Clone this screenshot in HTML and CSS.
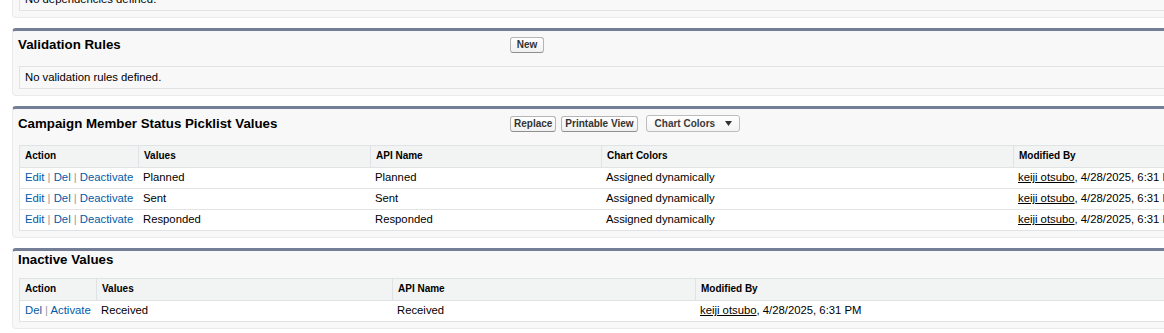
FILE: index.html
```html
<!DOCTYPE html>
<html lang="en">
    <head>
        <meta charset="UTF-8" />
        <link rel="stylesheet" href="styles.css">
        <title>Campaign Member Status</title>
    </head>
    <body>
        <div class="page">
            <!-- 字段依赖 -->
            <div class="pb">
                <div class="pb-header">
                    <h3 class="pb-title">Field Dependencies</h3>
                    <div class="pb-buttons">
                        <button class="btn">&nbsp;New&nbsp;</button>
                    </div>
                </div>
                <div class="pb-body">
                    <div class="pb-empty">No dependencies defined.</div>
                </div>
            </div>

            <!-- 验证规则 -->
            <div class="pb">
                <div class="pb-header">
                    <h3 class="pb-title">Validation Rules</h3>
                    <div class="pb-buttons">
                        <button class="btn">&nbsp;New&nbsp;</button>
                    </div>
                </div>
                <div class="pb-body">
                    <div class="pb-empty">No validation rules defined.</div>
                </div>
            </div>

            <!-- 活动成员状态 -->
            <div class="pb">
                <div class="pb-header">
                    <h3 class="pb-title">Campaign Member Status Picklist Values</h3>
                    <div class="pb-buttons">
                        <button class="btn">Replace</button>
                        <button class="btn">Printable View</button>
                        <button class="menu-btn">
                            Chart Colors
                            <svg width="7" height="5" viewBox="0 0 7 5"><path d="M0 0h7L3.5 5z" fill="#333"/></svg>
                        </button>
                    </div>
                </div>
                <div class="pb-body">
                    <table class="list">
                        <thead>
                            <tr>
                                <th class="col-action">Action</th>
                                <th class="col-values">Values</th>
                                <th class="col-api">API Name</th>
                                <th class="col-chart">Chart Colors</th>
                                <th>Modified By</th>
                            </tr>
                        </thead>
                        <tbody>
                            <tr>
                                <td><a href="#" class="action-link">Edit</a> <span class="sep">|</span> <a href="#" class="action-link">Del</a> <span class="sep">|</span> <a href="#" class="action-link">Deactivate</a></td>
                                <td>Planned</td>
                                <td>Planned</td>
                                <td>Assigned dynamically</td>
                                <td><a href="#" class="user-link">keiji otsubo</a>, 4/28/2025, 6:31 PM</td>
                            </tr>
                            <tr>
                                <td><a href="#" class="action-link">Edit</a> <span class="sep">|</span> <a href="#" class="action-link">Del</a> <span class="sep">|</span> <a href="#" class="action-link">Deactivate</a></td>
                                <td>Sent</td>
                                <td>Sent</td>
                                <td>Assigned dynamically</td>
                                <td><a href="#" class="user-link">keiji otsubo</a>, 4/28/2025, 6:31 PM</td>
                            </tr>
                            <tr>
                                <td><a href="#" class="action-link">Edit</a> <span class="sep">|</span> <a href="#" class="action-link">Del</a> <span class="sep">|</span> <a href="#" class="action-link">Deactivate</a></td>
                                <td>Responded</td>
                                <td>Responded</td>
                                <td>Assigned dynamically</td>
                                <td><a href="#" class="user-link">keiji otsubo</a>, 4/28/2025, 6:31 PM</td>
                            </tr>
                        </tbody>
                    </table>
                </div>
            </div>

            <!-- 非活动值 -->
            <div class="pb">
                <div class="pb-header">
                    <h3 class="pb-title">Inactive Values</h3>
                </div>
                <div class="pb-body">
                    <table class="list">
                        <thead>
                            <tr>
                                <th class="col-action-sm">Action</th>
                                <th class="col-values-lg">Values</th>
                                <th class="col-api-lg">API Name</th>
                                <th>Modified By</th>
                            </tr>
                        </thead>
                        <tbody>
                            <tr>
                                <td><a href="#" class="action-link">Del</a> <span class="sep">|</span> <a href="#" class="action-link">Activate</a></td>
                                <td>Received</td>
                                <td>Received</td>
                                <td><a href="#" class="user-link">keiji otsubo</a>, 4/28/2025, 6:31 PM</td>
                            </tr>
                        </tbody>
                    </table>
                </div>
            </div>
        </div>
    </body>
</html>
```

FILE: styles.css
```css
/* 基础样式 */
html,
body {
    margin: 0;
    padding: 0;
    overflow: hidden;
    background: #fff;
    font-family: "Liberation Sans", Arial, sans-serif;
    font-size: 11.3px;
    color: #000;
}

/* 页面内容比窗口宽，向上滚动了一段 */
.page {
    width: 1660px;
    margin-top: -50px;
    padding-left: 12px;
}

/* 页面区块 */
.pb {
    background: #f8f8f8;
    border: 1px solid #eaeaea;
    border-top: 3px solid #747e96;
    border-radius: 4px;
    margin-bottom: 10px;
}

.pb-header {
    display: flex;
    align-items: center;
    padding: 0 0 9px 5px;
}

.pb-title {
    flex: 0 0 492px;
    margin: 0;
    font-size: 13.3px;
    line-height: 18px;
    font-weight: bold;
    color: #000;
}

/* 有按钮时标题稍微往下 */
.pb-header:has(.pb-buttons) .pb-title {
    padding-top: 2px;
}

.pb-buttons {
    display: flex;
    align-items: center;
    gap: 5px;
    padding: 6px 0 4px;
}

.btn {
    height: 16px;
    margin: 0;
    padding: 0 3px;
    font-family: "Liberation Sans", Arial, sans-serif;
    font-size: 10px;
    font-weight: bold;
    line-height: 14px;
    color: #333;
    border: 1px solid #b5b5b5;
    border-bottom-color: #8f8f8f;
    border-radius: 3px;
    background: linear-gradient(to bottom, #ffffff 0%, #f0f0f0 100%);
}

.menu-btn {
    display: flex;
    align-items: center;
    gap: 10px;
    height: 17px;
    margin: 0 0 0 3px;
    padding: 0 7px 0 8px;
    font-family: "Liberation Sans", Arial, sans-serif;
    font-size: 10px;
    font-weight: bold;
    color: #3a3a3a;
    border: 1px solid #bdbdbd;
    border-radius: 3px;
    background: linear-gradient(to bottom, #ffffff 0%, #f3f3f3 100%);
}

.pb-body {
    padding: 0 6px 6px;
}

.pb-empty {
    border: 1px solid #e0e3e5;
    padding: 4px 5px;
    line-height: 13px;
}

/* 列表表格 */
.list {
    width: 100%;
    table-layout: fixed;
    border: 1px solid #e0e3e5;
    border-spacing: 0;
    background: #fff;
}

.list th {
    background: #f2f3f3;
    border-bottom: 1px solid #e0e3e5;
    border-left: 1px solid #e0e3e5;
    padding: 4px 2px 5px 5px;
    font-size: 10px;
    line-height: 12px;
    font-weight: bold;
    text-align: left;
    white-space: nowrap;
}

.list th:first-child {
    border-left: 0;
}

.list td {
    padding: 3px 2px 4px 5px;
    line-height: 13px;
    border-bottom: 1px solid #e3e3e3;
    white-space: nowrap;
    overflow: hidden;
}

.list tbody tr:last-child td {
    border-bottom: 0;
}

.col-action { width: 111px; }
.col-values { width: 224px; }
.col-api { width: 223px; }
.col-chart { width: 404px; }

.col-action-sm { width: 69px; }
.col-values-lg { width: 288px; }
.col-api-lg { width: 295px; }

.action-link {
    color: #015ba7;
    text-decoration: none;
}

.sep {
    color: #999;
}

.user-link {
    color: #000;
    text-decoration: underline;
}
```
